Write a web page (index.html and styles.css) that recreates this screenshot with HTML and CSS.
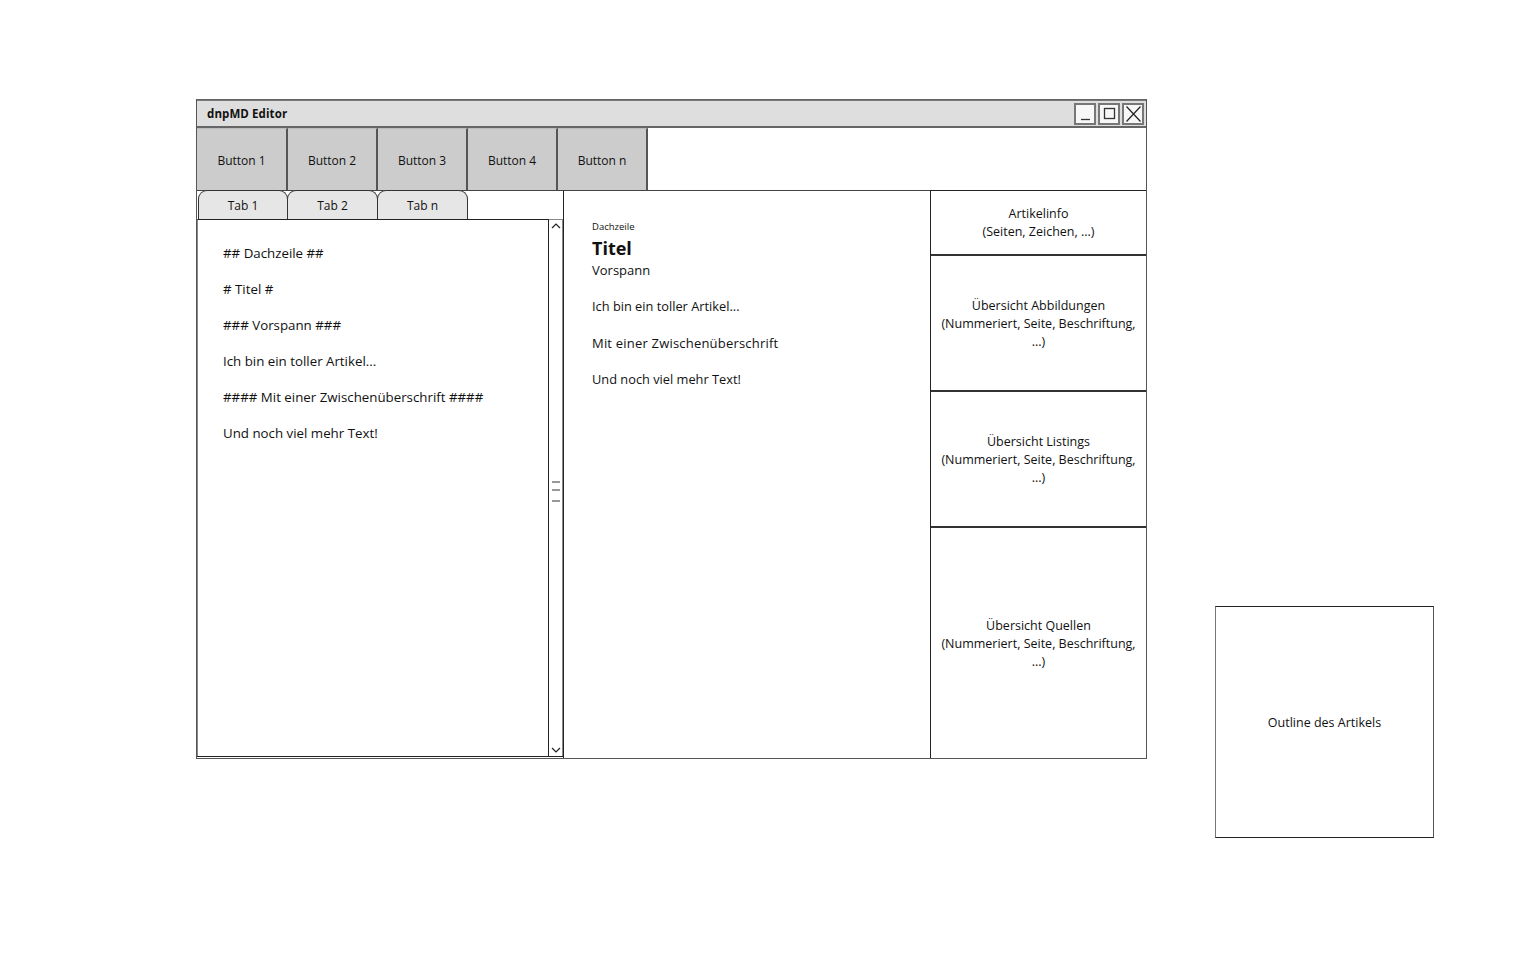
FILE: index.html
```html
<!DOCTYPE html>
<html lang="de">
<head>
<meta charset="utf-8">
<title>dnpMD Editor</title>
<link rel="stylesheet" href="styles.css">
</head>
<body>
<div class="canvas">
  <div class="window">
    <div class="titlebar">
      <span class="title">dnpMD Editor</span>
      <div class="controls">
        <span class="ctl"><svg width="17" height="18" viewBox="0 0 17 18"><path d="M4 14.5h9" stroke="#333" stroke-width="1.3" fill="none"/></svg></span>
        <span class="ctl"><svg width="17" height="18" viewBox="0 0 17 18"><rect x="3.5" y="3.5" width="10" height="10" stroke="#333" stroke-width="1.3" fill="none"/></svg></span>
        <span class="ctl"><svg width="17" height="18" viewBox="0 0 17 18"><path d="M1.5 1.5L15.5 16.5M15.5 1.5L1.5 16.5" stroke="#222" stroke-width="1.2" fill="none"/></svg></span>
      </div>
    </div>
    <div class="toolbar">
      <div class="tbtn">Button 1</div>
      <div class="tbtn">Button 2</div>
      <div class="tbtn">Button 3</div>
      <div class="tbtn">Button 4</div>
      <div class="tbtn">Button n</div>
    </div>
    <div class="main">
      <div class="editor-col">
        <div class="tabs">
          <div class="tab">Tab 1</div>
          <div class="tab">Tab 2</div>
          <div class="tab">Tab n</div>
        </div>
        <div class="editor">
          <div class="editor-text">
            <p>## Dachzeile ##</p>
            <p># Titel #</p>
            <p>### Vorspann ###</p>
            <p>Ich bin ein toller Artikel...</p>
            <p>#### Mit einer Zwischenüberschrift ####</p>
            <p>Und noch viel mehr Text!</p>
          </div>
          <div class="scrollbar">
            <svg class="arrow" width="12" height="10" viewBox="0 0 12 10"><path d="M2 7L6 3L10 7" stroke="#222" stroke-width="1.2" fill="none"/></svg>
            <svg class="thumb" width="12" height="24" viewBox="0 0 12 24"><path d="M2 2h8M2 10h8M2 21h8" stroke="#333" stroke-width="1" fill="none"/></svg>
            <svg class="arrow" width="12" height="10" viewBox="0 0 12 10"><path d="M2 3L6 7L10 3" stroke="#222" stroke-width="1.2" fill="none"/></svg>
          </div>
        </div>
      </div>
      <div class="preview">
        <div class="pv-dach">Dachzeile</div>
        <div class="pv-titel">Titel</div>
        <div class="pv-vorspann">Vorspann</div>
        <p class="pv-text">Ich bin ein toller Artikel...</p>
        <p class="pv-zwischen">Mit einer Zwischenüberschrift</p>
        <p class="pv-text">Und noch viel mehr Text!</p>
      </div>
      <div class="sidebar">
        <div class="side-sec sec-info">Artikelinfo<br>(Seiten, Zeichen, ...)</div>
        <div class="side-sec sec-mid">Übersicht Abbildungen<br>(Nummeriert, Seite, Beschriftung,<br>...)</div>
        <div class="side-sec sec-mid">Übersicht Listings<br>(Nummeriert, Seite, Beschriftung,<br>...)</div>
        <div class="side-sec sec-last">Übersicht Quellen<br>(Nummeriert, Seite, Beschriftung,<br>...)</div>
      </div>
    </div>
  </div>
  <div class="outline">Outline des Artikels</div>
</div>
</body>
</html>
```

FILE: styles.css
```css
* { box-sizing: border-box; }

html, body {
  margin: 0;
  padding: 0;
  background: #ffffff;
}

body {
  font-family: "Open Sans", "DejaVu Sans", sans-serif;
  font-size: 12px;
  color: #111;
}

.canvas {
  display: flex;
  align-items: flex-start;
  gap: 68px;
  padding: 99px 0 0 196px;
}

.window {
  width: 951px;
  height: 660px;
  border: 1px solid #555;
  border-top: 1px solid #666;
  display: flex;
  flex-direction: column;
  background: #fff;
}

.titlebar {
  height: 28px;
  flex: none;
  background: #dedede;
  border-top: 1px solid #777;
  border-bottom: 2px solid #666;
  display: flex;
  align-items: center;
  justify-content: space-between;
  padding: 0 2px 0 10px;
}

.title {
  font-weight: 700;
  font-size: 11.5px;
  letter-spacing: 0.1px;
}

.controls {
  display: flex;
  gap: 2px;
  margin-top: 1px;
}

.ctl {
  width: 22px;
  height: 22px;
  border: 2px solid #777;
  background: #f7f7f7;
  display: flex;
  align-items: center;
  justify-content: center;
}

.ctl svg { display: block; }

.toolbar {
  height: 62px;
  flex: none;
  display: flex;
  background: #fff;
}

.tbtn {
  width: 90px;
  background: #cccccc;
  border-right: 2px solid #555;
  border-top: 1px solid #bbb;
  display: flex;
  align-items: center;
  justify-content: center;
  font-size: 12px;
  padding-top: 1px;
}

.tbtn:first-child { width: 91px; }

.main {
  flex: 1;
  display: grid;
  grid-template-columns: 366px 367px 1fr;
  border-top: 1px solid #444;
  min-height: 0;
}

.editor-col {
  display: flex;
  flex-direction: column;
  margin-top: -1px;
}

.tabs {
  height: 29px;
  display: flex;
  padding-left: 1px;
  flex: none;
}

.tab {
  width: 91px;
  height: 29px;
  background: #e6e6e6;
  border: 1px solid #333;
  border-bottom: none;
  border-radius: 9px 9px 0 0;
  display: flex;
  align-items: center;
  justify-content: center;
  font-size: 12px;
  padding-top: 1px;
}

.tab:first-child { width: 90px; }

.tab + .tab { margin-left: -1px; }

.editor {
  flex: 1;
  display: flex;
  border-bottom: 1px solid #222;
  margin-bottom: 1px;
}

.editor-text {
  flex: 1;
  border-top: 1px solid #222;
  border-left: 1px solid #888;
  border-right: 1px solid #222;
  padding: 24px 10px 0 25px;
}

.editor-text p {
  margin: 0 0 18px 0;
  line-height: 18px;
  font-size: 13.3px;
}

.scrollbar {
  width: 14px;
  flex: none;
  margin-top: 0;
  border: 1px solid #888;
  border-left: none;
  border-bottom: none;
  display: flex;
  flex-direction: column;
  align-items: center;
  justify-content: space-between;
  padding: 1px 0 1px 0;
}

.scrollbar .thumb { margin-top: 8px; }

.preview {
  border-left: 1px solid #222;
  border-top: 1px solid #444;
  margin-top: -1px;
  padding: 30px 20px 0 28px;
}

.pv-dach {
  font-size: 9.5px;
  line-height: 12px;
}

.pv-titel {
  font-size: 18px;
  font-weight: 700;
  line-height: 22px;
  margin-top: 4px;
}

.pv-vorspann {
  font-size: 13px;
  line-height: 18px;
  margin-top: 2px;
}

.preview p {
  margin: 18px 0 0 0;
  line-height: 18px;
  font-size: 12.8px;
}

.preview .pv-zwischen {
  font-size: 13px;
  letter-spacing: 0.2px;
  margin-top: 19px;
}

.sidebar {
  display: flex;
  flex-direction: column;
  border-left: 1px solid #222;
  margin-top: -1px;
}

.side-sec {
  display: flex;
  align-items: center;
  justify-content: center;
  text-align: center;
  font-size: 12.5px;
  line-height: 18px;
  border-bottom: 1px solid #222;
  padding: 1px 2px 0;
}

.sec-info {
  height: 66px;
  border-top: 1px solid #222;
  border-bottom: 2px solid #333;
}

.sec-mid {
  height: 136px;
  border-bottom: 2px solid #333;
}

.sec-last {
  flex: 1;
  border-bottom: none;
}

.outline {
  margin-top: 507px;
  width: 219px;
  height: 232px;
  border: 1px solid #222;
  border-left-color: #777;
  border-right-color: #555;
  display: flex;
  align-items: center;
  justify-content: center;
  font-size: 12.5px;
}
```
